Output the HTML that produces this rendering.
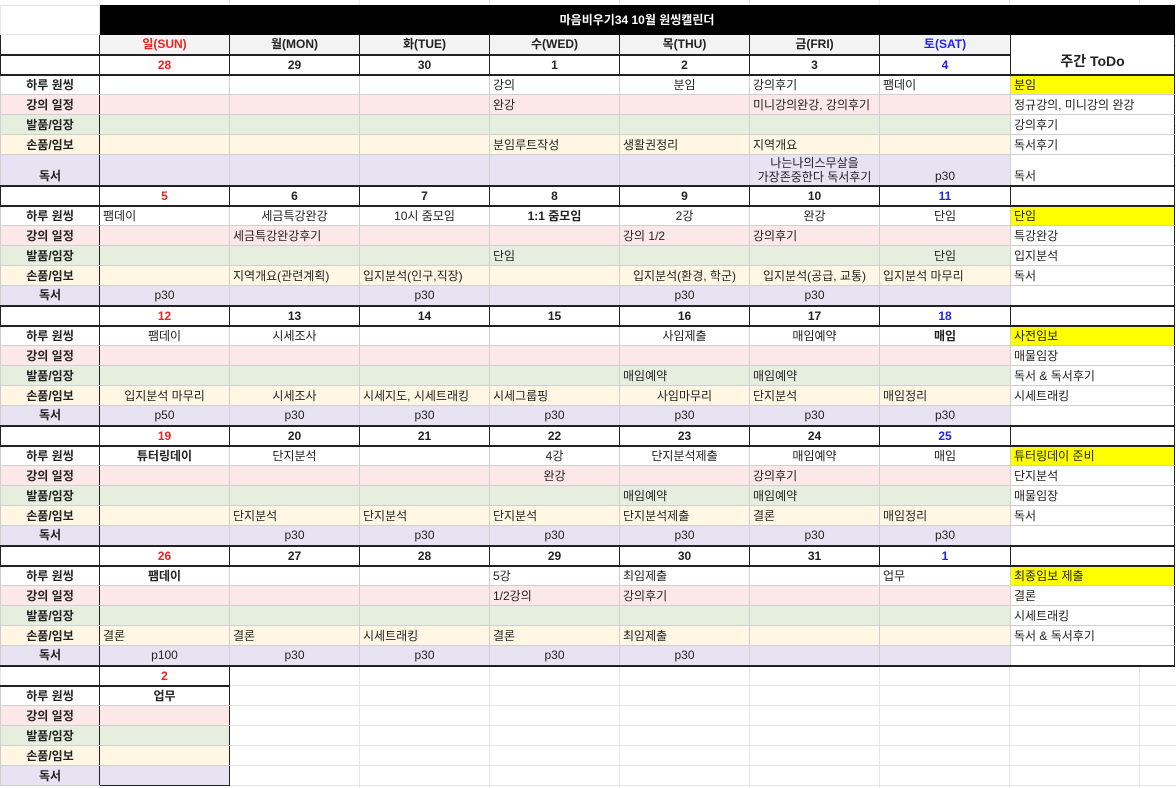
<!DOCTYPE html>
<html><head><meta charset="utf-8"><style>
body{margin:0;width:1176px;height:788px;overflow:hidden;background:#fff;font-family:"Liberation Sans","Noto Sans CJK KR",sans-serif;font-size:12px;color:#222;
background-image:linear-gradient(#e6e6e6 1px,transparent 1px),linear-gradient(90deg,#e6e6e6 1px,transparent 1px);background-size:130px 20px,130px 20px;background-position:99px 5px,99px 0}
table{position:absolute;left:0;top:5px;border-collapse:collapse;table-layout:fixed;width:1175px}
td{border:1px solid #cfcfcf;padding:0 3px;white-space:nowrap;overflow:hidden;text-align:center;line-height:14px;background:#fff}
tr{height:20px}
td.l{text-align:left}
td.h{font-weight:bold;border-right:1px solid #222}
tr.d td{border-top:2px solid #222;border-bottom:2px solid #222;border-left:1px solid #222;border-right:1px solid #222;font-weight:bold}
tr.p td{background:#fce8e8}tr.g td{background:#e5eedf}tr.y td{background:#fff7e3}tr.v td{background:#e7e3f3}
tr td.t{background:#fff;border-left:1px solid #222;border-right:1px solid #222;text-align:left}
td.ty{background:#ffff00!important}
.r{color:#ee2222}.b{color:#2222ee}
.bd{font-weight:bold}
.tt{background:#000;color:#fff;font-weight:bold;border:1px solid #000}
.gh td{background:#f3f3f3;font-weight:bold;border-left:1px solid #222;border-right:1px solid #222}
.e td{background:transparent;border-color:#e6e6e6}
</style></head><body>
<table>
<colgroup><col style="width:99px"><col style="width:130px"><col style="width:130px"><col style="width:130px"><col style="width:130px"><col style="width:130px"><col style="width:130px"><col style="width:131px"><col style="width:164px"><col></colgroup>
<tr style="height:29px"><td style="border-color:#e6e6e6"></td><td class="tt" colspan="8">마음비우기34 10월 원씽캘린더</td><td style="border:none;background:transparent"></td></tr>
<tr class="gh"><td style="background:#fff"></td><td class="r">일(SUN)</td><td>월(MON)</td><td>화(TUE)</td><td>수(WED)</td><td>목(THU)</td><td>금(FRI)</td><td class="b">토(SAT)</td><td rowspan="2" style="background:#fff;font-size:14px;padding-top:14px;border-bottom:2px solid #222">주간 ToDo</td><td style="border:none;background:transparent"></td></tr>
<tr class="d"><td></td><td class="r">28</td><td>29</td><td>30</td><td>1</td><td>2</td><td>3</td><td class="b">4</td></tr>
<tr><td class="h">하루 원씽</td><td></td><td></td><td></td><td class="l">강의</td><td>분임</td><td class="l">강의후기</td><td class="l">팸데이</td><td class="t ty">분임</td></tr>
<tr class="p"><td class="h">강의 일정</td><td></td><td></td><td></td><td class="l">완강</td><td></td><td class="l">미니강의완강, 강의후기</td><td></td><td class="t">정규강의, 미니강의 완강</td></tr>
<tr class="g"><td class="h">발품/임장</td><td></td><td></td><td></td><td></td><td></td><td></td><td></td><td class="t">강의후기</td></tr>
<tr class="y"><td class="h">손품/임보</td><td></td><td></td><td></td><td class="l">분임루트작성</td><td class="l">생활권정리</td><td class="l">지역개요</td><td></td><td class="t">독서후기</td></tr>
<tr class="v" style="height:31px"><td class="h" style="vertical-align:bottom;padding-bottom:2px">독서</td><td></td><td></td><td></td><td></td><td></td><td>나는나의스무살을<br>가장존중한다 독서후기</td><td style="vertical-align:bottom;padding-bottom:2px">p30</td><td class="t" style="vertical-align:bottom;padding-bottom:2px">독서</td></tr>
<tr class="d"><td></td><td class="r">5</td><td>6</td><td>7</td><td>8</td><td>9</td><td>10</td><td class="b">11</td><td class="t"></td></tr>
<tr><td class="h">하루 원씽</td><td class="l">팸데이</td><td>세금특강완강</td><td>10시 줌모임</td><td class="bd">1:1 줌모임</td><td>2강</td><td>완강</td><td>단임</td><td class="t ty">단임</td></tr>
<tr class="p"><td class="h">강의 일정</td><td></td><td class="l">세금특강완강후기</td><td></td><td></td><td class="l">강의 1/2</td><td class="l">강의후기</td><td></td><td class="t">특강완강</td></tr>
<tr class="g"><td class="h">발품/임장</td><td></td><td></td><td></td><td class="l">단임</td><td></td><td></td><td>단임</td><td class="t">입지분석</td></tr>
<tr class="y"><td class="h">손품/임보</td><td></td><td class="l">지역개요(관련계획)</td><td class="l">입지분석(인구,직장)</td><td></td><td>입지분석(환경, 학군)</td><td>입지분석(공급, 교통)</td><td class="l">입지분석 마무리</td><td class="t">독서</td></tr>
<tr class="v"><td class="h">독서</td><td>p30</td><td></td><td>p30</td><td></td><td>p30</td><td>p30</td><td></td><td class="t"></td></tr>
<tr class="d"><td></td><td class="r">12</td><td>13</td><td>14</td><td>15</td><td>16</td><td>17</td><td class="b">18</td><td class="t"></td></tr>
<tr><td class="h">하루 원씽</td><td>팸데이</td><td>시세조사</td><td></td><td></td><td>사임제출</td><td>매임예약</td><td class="bd">매임</td><td class="t ty">사전임보</td></tr>
<tr class="p"><td class="h">강의 일정</td><td></td><td></td><td></td><td></td><td></td><td></td><td></td><td class="t">매물임장</td></tr>
<tr class="g"><td class="h">발품/임장</td><td></td><td></td><td></td><td></td><td class="l">매임예약</td><td class="l">매임예약</td><td></td><td class="t">독서 &amp; 독서후기</td></tr>
<tr class="y"><td class="h">손품/임보</td><td>입지분석 마무리</td><td>시세조사</td><td class="l">시세지도, 시세트래킹</td><td class="l">시세그룹핑</td><td>사임마무리</td><td class="l">단지분석</td><td class="l">매임정리</td><td class="t">시세트래킹</td></tr>
<tr class="v"><td class="h">독서</td><td>p50</td><td>p30</td><td>p30</td><td>p30</td><td>p30</td><td>p30</td><td>p30</td><td class="t"></td></tr>
<tr class="d"><td></td><td class="r">19</td><td>20</td><td>21</td><td>22</td><td>23</td><td>24</td><td class="b">25</td><td class="t"></td></tr>
<tr><td class="h">하루 원씽</td><td class="bd">튜터링데이</td><td>단지분석</td><td></td><td>4강</td><td>단지분석제출</td><td>매임예약</td><td>매임</td><td class="t ty">튜터링데이 준비</td></tr>
<tr class="p"><td class="h">강의 일정</td><td></td><td></td><td></td><td>완강</td><td></td><td class="l">강의후기</td><td></td><td class="t">단지분석</td></tr>
<tr class="g"><td class="h">발품/임장</td><td></td><td></td><td></td><td></td><td class="l">매임예약</td><td class="l">매임예약</td><td></td><td class="t">매물임장</td></tr>
<tr class="y"><td class="h">손품/임보</td><td></td><td class="l">단지분석</td><td class="l">단지분석</td><td class="l">단지분석</td><td class="l">단지분석제출</td><td class="l">결론</td><td class="l">매임정리</td><td class="t">독서</td></tr>
<tr class="v"><td class="h">독서</td><td></td><td>p30</td><td>p30</td><td>p30</td><td>p30</td><td>p30</td><td>p30</td><td class="t"></td></tr>
<tr class="d"><td></td><td class="r">26</td><td>27</td><td>28</td><td>29</td><td>30</td><td>31</td><td class="b">1</td><td class="t"></td></tr>
<tr><td class="h">하루 원씽</td><td class="bd">팸데이</td><td></td><td></td><td class="l">5강</td><td class="l">최임제출</td><td></td><td class="l">업무</td><td class="t ty">최종임보 제출</td></tr>
<tr class="p"><td class="h">강의 일정</td><td></td><td></td><td></td><td class="l">1/2강의</td><td class="l">강의후기</td><td></td><td></td><td class="t">결론</td></tr>
<tr class="g"><td class="h">발품/임장</td><td></td><td></td><td></td><td></td><td></td><td></td><td></td><td class="t">시세트래킹</td></tr>
<tr class="y"><td class="h">손품/임보</td><td class="l">결론</td><td class="l">결론</td><td class="l">시세트래킹</td><td class="l">결론</td><td class="l">최임제출</td><td></td><td></td><td class="t">독서 &amp; 독서후기</td></tr>
<tr class="v"><td class="h">독서</td><td>p100</td><td>p30</td><td>p30</td><td>p30</td><td>p30</td><td></td><td></td><td class="t" style="border-bottom:1px solid #222"></td></tr>
<tr class="d"><td style="border-left:1px solid #e6e6e6"></td><td class="r">2</td><td style="border:none;border-top:2px solid #222;background:transparent" colspan="7"></td></tr>
<tr><td class="h">하루 원씽</td><td class="bd" style="border-right:1px solid #222">업무</td></tr>
<tr class="p"><td class="h">강의 일정</td><td style="border-right:1px solid #222"></td></tr>
<tr class="g"><td class="h">발품/임장</td><td style="border-right:1px solid #222"></td></tr>
<tr class="y"><td class="h">손품/임보</td><td style="border-right:1px solid #222"></td></tr>
<tr class="v"><td class="h">독서</td><td style="border-right:1px solid #222;border-bottom:1px solid #222"></td></tr>
</table>
</body></html>
